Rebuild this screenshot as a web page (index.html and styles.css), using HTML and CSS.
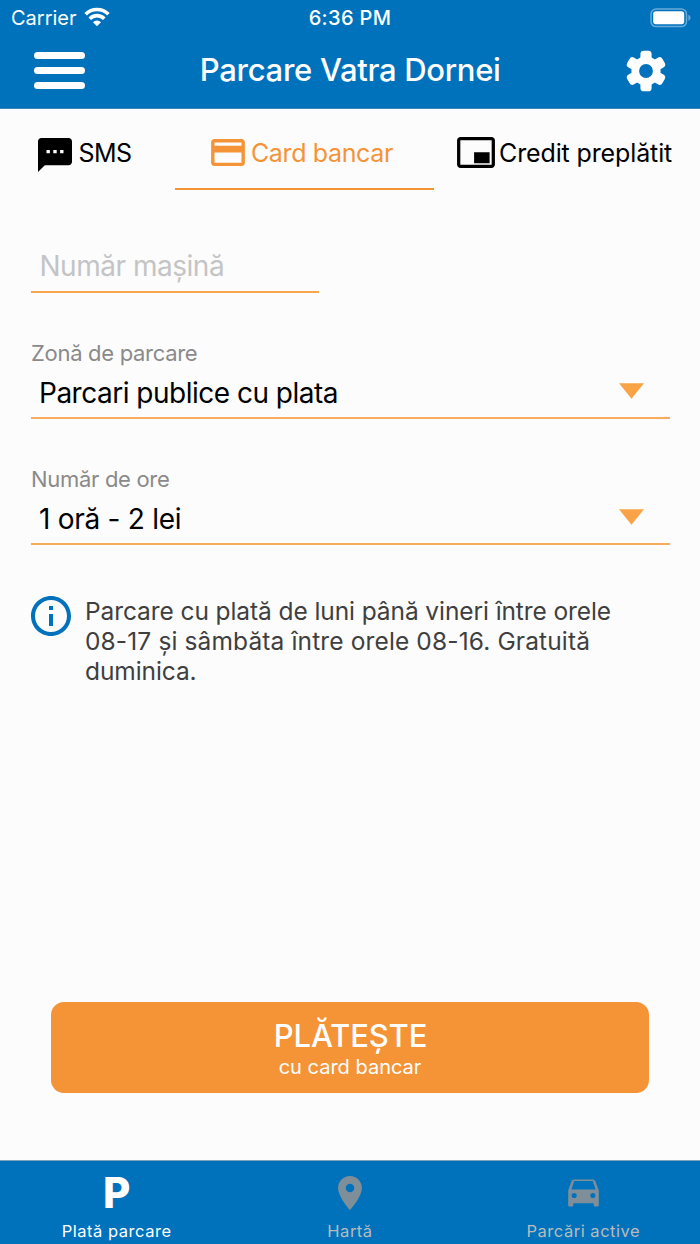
FILE: index.html
```html
<!DOCTYPE html>
<html lang="ro">
<head>
<meta charset="utf-8">
<title>Parcare Vatra Dornei</title>
<link rel="stylesheet" href="styles.css">
</head>
<body>
<div class="screen">
  <header class="header">
    <div class="status">
      <div class="status-left"><span class="carrier">Carrier</span>
        <svg class="wifi" viewBox="0 0 26 20" width="26" height="20"><g fill="none" stroke="#fff" stroke-width="3.6"><path d="M1.6 7.2a16.2 16.2 0 0 1 22.8 0"/><path d="M5.7 11.7a10.3 10.3 0 0 1 14.6 0"/></g><path d="M13 19.2l-4-4a5.7 5.7 0 0 1 8 0z" fill="#fff"/></svg>
      </div>
      <span class="clock">6:36 PM</span>
      <div class="status-right">
        <svg viewBox="0 0 42 20" width="42" height="20"><rect x="1" y="1" width="35.5" height="17.6" rx="5" fill="none" stroke="#69a9d9" stroke-width="1.5"/><rect x="3.2" y="3.2" width="31" height="13" rx="2.6" fill="#fff"/><path d="M38.4 6.8c2.8 1 2.8 5 0 6z" fill="#69a9d9"/></svg>
      </div>
    </div>
    <div class="toolbar">
      <div class="burger"><i></i><i></i><i></i></div>
      <h1 class="title">Parcare Vatra Dornei</h1>
      <svg class="gear" viewBox="-21 -21 42 42" width="42" height="42"><g fill="#fff"><circle r="14.6"/><rect x="-5.6" y="-20.3" width="11.2" height="40.6" rx="3.4"/><rect x="-5.6" y="-20.3" width="11.2" height="40.6" rx="3.4" transform="rotate(60)"/><rect x="-5.6" y="-20.3" width="11.2" height="40.6" rx="3.4" transform="rotate(120)"/></g><circle r="6.9" fill="#0072bc"/></svg>
    </div>
  </header>
  <nav class="tabs">
    <a class="tab tab-sms"><svg viewBox="2 2 20 20" width="34" height="34"><path d="M20 2H4c-1.1 0-2 .9-2 2v18l4-4h14c1.1 0 2-.9 2-2V4c0-1.1-.9-2-2-2zM9 11H7V9h2v2zm4 0h-2V9h2v2zm4 0h-2V9h2v2z"/></svg><span>SMS</span></a>
    <a class="tab tab-card active"><svg viewBox="2 4 20 16" width="34" height="27"><path d="M20 4H4c-1.11 0-1.99.89-1.99 2L2 18c0 1.11.89 2 2 2h16c1.11 0 2-.89 2-2V6c0-1.11-.89-2-2-2zm0 14H4v-6h16v6zm0-10H4V6h16v2z"/></svg><span>Card bancar</span></a>
    <a class="tab tab-credit"><svg viewBox="1 3 22 18" width="38" height="31"><path d="M19.9 11.9h-9v6.4h9zM23 19V4.98C23 3.88 22.1 3 21 3H3c-1.1 0-2 .88-2 1.98V19c0 1.1.9 2 2 2h18c1.1 0 2-.9 2-2zm-1.9.1H2.9V4.9h18.2z" fill-rule="evenodd"/></svg><span>Credit preplătit</span></a>
  </nav>
  <main class="form">
    <div class="input">Număr mașină</div>
    <div class="field"><div class="label">Zonă de parcare</div><div class="select zone"><span>Parcari publice cu plata</span><svg viewBox="0 0 26 16" width="25" height="16"><path d="M0 0h26L13 16z"/></svg></div></div>
    <div class="field"><div class="label">Număr de ore</div><div class="select"><span>1 oră - 2 lei</span><svg viewBox="0 0 26 16" width="25" height="16"><path d="M0 0h26L13 16z"/></svg></div></div>
    <div class="info">
      <svg viewBox="2 2 20 20" width="40" height="40"><path d="M11 7h2v2h-2zm0 4h2v6h-2zm1-9C6.48 2 2 6.48 2 12s4.48 10 10 10 10-4.48 10-10S17.52 2 12 2zm0 18c-4.41 0-8-3.59-8-8s3.59-8 8-8 8 3.59 8 8-3.59 8-8 8z"/></svg>
      <p><span class="line-1">Parcare cu plată de luni până vineri între orele</span><br><span class="line-2">08-17 și sâmbăta între orele 08-16. Gratuită</span><br><span class="line-1">duminica.</span></p>
    </div>
  </main>
  <button class="pay"><span class="pay-main">PLĂTEȘTE</span><span class="pay-sub">cu card bancar</span></button>
  <footer class="nav">
    <a class="nav-item on"><b class="park">P</b><span>Plată parcare</span></a>
    <a class="nav-item"><svg viewBox="5 2 14 20" width="24" height="34"><path d="M12 2C8.13 2 5 5.13 5 9c0 5.25 7 13 7 13s7-7.75 7-13c0-3.87-3.13-7-7-7zm0 9.5a2.5 2.5 0 0 1 0-5 2.5 2.5 0 0 1 0 5z"/></svg><span>Hartă</span></a>
    <a class="nav-item"><svg viewBox="3 3 18 20" width="31" height="34"><path d="M18.92 6c-.2-.58-.76-1-1.42-1h-11c-.66 0-1.22.42-1.42 1L3 11.5V20c0 .55.45 1 1 1h1c.55 0 1-.45 1-1v-1h12v1c0 .55.45 1 1 1h1c.55 0 1-.45 1-1v-8.5zM6.5 16a1.5 1.5 0 1 1 0-3 1.5 1.5 0 0 1 0 3zm11 0a1.5 1.5 0 1 1 0-3 1.5 1.5 0 0 1 0 3zM4.9 11L6.5 6h11l1.6 5z"/></svg><span>Parcări active</span></a>
  </footer>
</div>
</body>
</html>
```
FILE: styles.css
```css
* { box-sizing: border-box; }
body { margin: 0; font-family: Inter, "Liberation Sans", sans-serif; background: #fcfcfc; color: #000; }
.screen { width: 700px; height: 1244px; display: flex; flex-direction: column; overflow: hidden; }
.screen span { white-space: nowrap; }
.header { height: 108.5px; flex: none; background: #0072bc; color: #fff; border-bottom: 1px solid #3c87b8; }
.status { height: 36px; display: grid; grid-template-columns: 1fr auto 1fr; align-items: center; font-size: 20px; line-height: 36px; }
.status-left { display: flex; align-items: center; gap: 8px; padding-left: 11px; }
.wifi { margin: -3px 0 0 -1px; }
.status-right { display: flex; justify-content: flex-end; padding-right: 8.5px; }
.status-right svg { margin-top: -1px; }
.clock { font-weight: 500; letter-spacing: 0.35px; }
.toolbar { height: 69px; display: grid; grid-template-columns: 51px 1fr 42px; align-items: center; padding: 0 33.5px 0 34px; }
.burger { display: flex; flex-direction: column; gap: 8px; }
.burger i { height: 7px; border-radius: 4px; background: #fff; }
.title { margin: 0 9px 1px 0; text-align: center; font-size: 31px; font-weight: 500; line-height: 40px; letter-spacing: -0.3px; }
.gear { margin-top: 0; }
.tabs { display: flex; height: 81.5px; flex: none; font-size: 25px; }
.tab { display: flex; align-items: center; height: 81.5px; padding-top: 9px; border-bottom: 2px solid transparent; }
.tab-sms { width: 175.4px; padding-left: 38.4px; gap: 6px; letter-spacing: -0.5px; }
.tab-sms svg { margin-top: 4px; }
.tab-card { width: 258.6px; padding-left: 35.5px; gap: 6px; letter-spacing: -0.35px; }
.tab-credit { width: 266px; padding-left: 23px; gap: 4px; letter-spacing: -0.12px; }
.tab-card svg, .tab-credit svg { margin-top: -1px; }
.active { color: #f59337; fill: #f59337; border-color: #f59337; }
.form { flex: none; height: 812px; padding: 50px 30.5px 0 30.5px; }
.input { width: 288.5px; height: 52.5px; padding: 6px 0 0 9px; border-bottom: 2px solid #f8a64b; color: #c4c4c6; font-size: 28px; line-height: 40px; letter-spacing: -0.48px; }
.field { height: 126px; padding-top: 45px; }
.label { padding-left: 0.5px; font-size: 22px; line-height: 30px; color: #8a8a8a; letter-spacing: -0.3px; }
.select { height: 51px; display: flex; align-items: flex-start; justify-content: space-between; padding: 5px 25.5px 0 8.5px; border-bottom: 2px solid #f8ab5c; font-size: 28px; line-height: 40px; letter-spacing: -0.27px; }
.zone { letter-spacing: -0.5px; }
.select svg { margin-top: 10px; fill: #f9a346; }
.info { display: flex; gap: 14.5px; margin-top: 51px; }
.info svg { fill: #0072bc; flex: none; }
.info p { margin: 0; font-size: 24.5px; line-height: 30.2px; color: #3f3f3f; }
.line-1 { letter-spacing: -0.09px; }
.line-2 { letter-spacing: 0.13px; }
.pay { flex: none; width: 598px; height: 91px; margin: 0 0 0 51px; padding: 13px 0 0; border: 0; border-radius: 13px; background: #f59337; color: #fff; font-family: inherit; display: flex; flex-direction: column; align-items: center; }
.pay-main { padding-left: 1px; font-size: 31px; font-weight: 500; line-height: 42px; letter-spacing: -0.15px; }
.pay-sub { font-size: 20px; line-height: 20px; }
.nav { flex: none; height: 84px; margin-top: auto; border-top: 1px solid #7da3bd; background: #0072bc; display: grid; grid-template-columns: repeat(3, 1fr); color: #b9babc; font-size: 16.5px; letter-spacing: 0.52px; }
.nav-item { display: flex; flex-direction: column; align-items: center; padding-top: 15px; line-height: 20px; gap: 11px; fill: #7f8f99; }
.nav-item svg { flex: none; }
.on { color: #fff; }
.park { height: 34px; padding-left: 0; font-size: 42px; font-weight: 800; line-height: 34px; letter-spacing: 0; }
```
